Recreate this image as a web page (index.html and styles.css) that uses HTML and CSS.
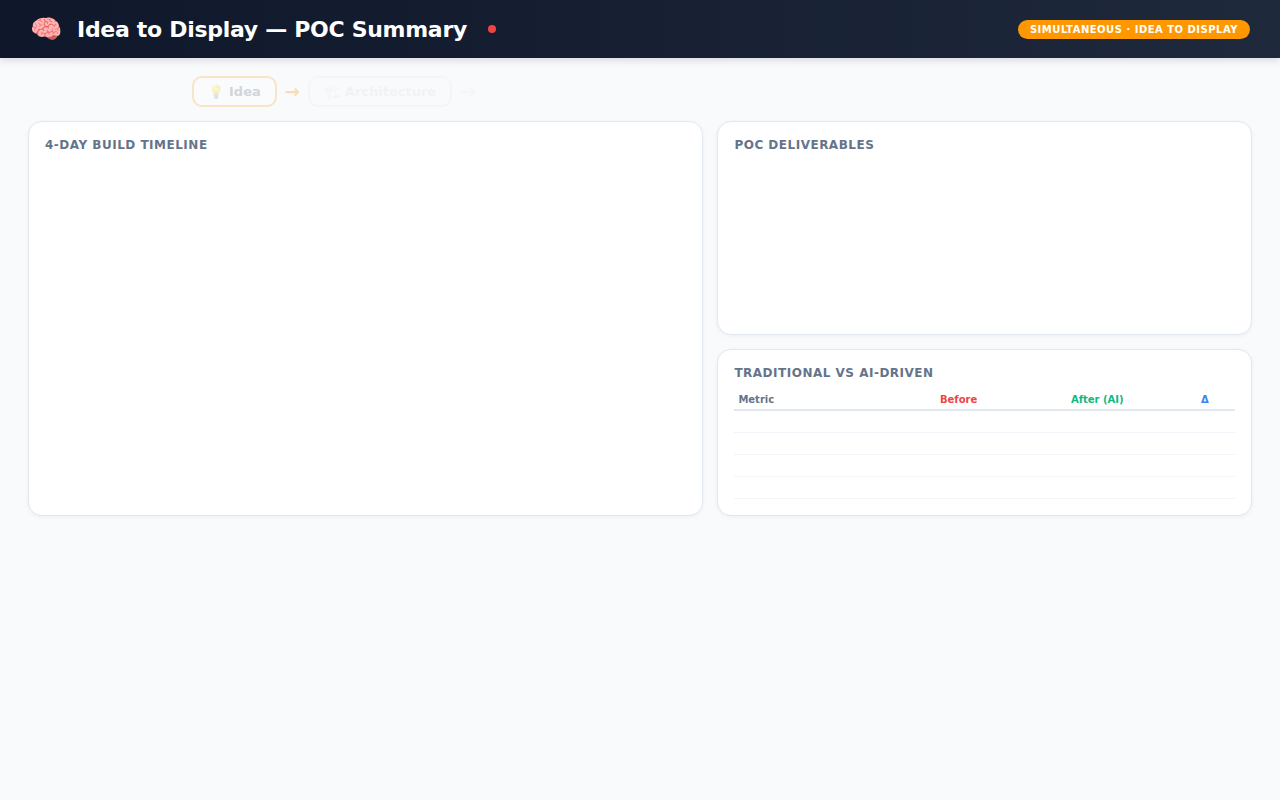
FILE: index.html
```html
<!DOCTYPE html>
<html lang="en">
<head>
<meta charset="utf-8">
<title>Idea to Display — POC Summary</title>
<link rel="stylesheet" href="styles.css">
</head>
<body>
<header class="topbar">
  <div class="brand">
    <span class="brand-icon">🧠</span>
    <h1 class="brand-title">Idea to Display — POC Summary</h1>
    <span class="live-dot"></span>
  </div>
  <span class="badge">SIMULTANEOUS · IDEA TO DISPLAY</span>
</header>
<main class="page">
  <nav class="pipeline">
    <div class="step step-idea"><span>💡</span><span>Idea</span></div>
    <span class="arrow arrow-idea">→</span>
    <div class="step step-arch"><span>🏗️</span><span>Architecture</span></div>
    <span class="arrow arrow-arch">→</span>
  </nav>
  <div class="grid">
    <section class="card card-timeline">
      <h2 class="card-title">4-Day Build Timeline</h2>
    </section>
    <div class="side">
      <section class="card card-deliverables">
        <h2 class="card-title">POC Deliverables</h2>
      </section>
      <section class="card card-compare">
        <h2 class="card-title">Traditional vs AI-Driven</h2>
        <table class="compare">
          <thead>
            <tr>
              <th class="col-metric">Metric</th>
              <th class="col-before">Before</th>
              <th class="col-after">After (AI)</th>
              <th class="col-delta">Δ</th>
            </tr>
          </thead>
          <tbody>
            <tr><td></td><td></td><td></td><td></td></tr>
            <tr><td></td><td></td><td></td><td></td></tr>
            <tr><td></td><td></td><td></td><td></td></tr>
            <tr><td></td><td></td><td></td><td></td></tr>
          </tbody>
        </table>
      </section>
    </div>
  </div>
</main>
</body>
</html>
```
FILE: styles.css
```css
* { box-sizing: border-box; }
html, body { margin: 0; height: 100%; }
body {
  background: #f8fafc;
  font-family: "DejaVu Sans", sans-serif;
  color: #1e293b;
  overflow: hidden;
}
.topbar {
  height: 58px;
  display: flex;
  align-items: center;
  justify-content: space-between;
  padding: 0 30px;
  background: linear-gradient(90deg, #0f172a, #1e293b);
  box-shadow: 0 2px 8px rgba(15, 23, 42, 0.15);
}
.brand { display: flex; align-items: center; gap: 14px; }
.brand-icon { font-size: 26px; line-height: 1; width: 33px; }
.brand-title {
  margin: 0;
  padding-top: 2px;
  font-size: 22px;
  font-weight: 700;
  letter-spacing: -0.3px;
  color: #fff;
  line-height: 1;
}
.live-dot {
  width: 8px;
  height: 8px;
  margin-left: 7px;
  border-radius: 50%;
  background: #ef4444;
}
.badge {
  padding: 3px 12px;
  border-radius: 20px;
  background: #ff9800;
  color: #fff;
  font-size: 10px;
  font-weight: 700;
  letter-spacing: 0.5px;
  line-height: 13px;
}
.page { padding: 18px 28px 0; }
.pipeline {
  display: flex;
  align-items: center;
  gap: 8px;
  height: 31px;
  padding-left: 164px;
  margin-bottom: 14px;
}
.step {
  display: flex;
  align-items: center;
  gap: 5px;
  height: 31px;
  padding: 0 14px;
  border: 2px solid #ff9800;
  border-radius: 10px;
  background: #fff;
  font-size: 13px;
  font-weight: 700;
  color: #475569;
}
.step-idea { opacity: 0.22; }
.step-arch { opacity: 0.04; border-color: #94a3b8; }
.arrow { font-size: 18px; font-weight: 700; color: #ff9800; line-height: 1; }
.arrow-idea { opacity: 0.3; }
.arrow-arch { opacity: 0.02; color: #64748b; }
.grid {
  display: grid;
  grid-template-columns: 675fr 534.6fr;
  gap: 14.4px;
  height: 395px;
}
.side {
  display: grid;
  grid-template-rows: 1fr 167px;
  gap: 14px;
  min-height: 0;
}
.card {
  background: #fff;
  border: 1px solid #e2e8f0;
  border-radius: 14px;
  padding: 16px;
  box-shadow: 0 1px 4px rgba(15, 23, 42, 0.05);
}
.card-title {
  margin: 0 0 11px;
  font-size: 12px;
  line-height: 14px;
  font-weight: 700;
  letter-spacing: 0.5px;
  text-transform: uppercase;
  color: #64748b;
}
.compare {
  width: 100%;
  border-collapse: collapse;
  table-layout: fixed;
  font-size: 10px;
}
.compare th {
  padding: 0 4px 2px;
  height: 19px;
  text-align: left;
  font-weight: 700;
  border-bottom: 2px solid #e2e8f0;
}
.compare td {
  height: 22px;
  padding: 0;
  border-bottom: 1px solid #f1f5f9;
}
.col-metric { width: 201.5px; color: #64748b; }
.col-before { width: 131px; color: #ef4444; }
.col-after { width: 130px; color: #10b981; }
.col-delta { color: #3b82f6; }
```
